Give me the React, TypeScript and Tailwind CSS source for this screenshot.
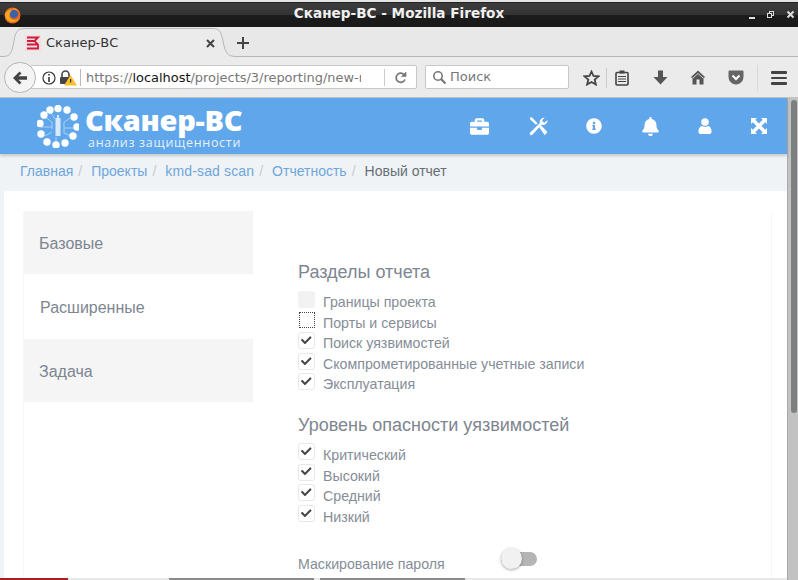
import React from "react";
import { FaBriefcase, FaInfoCircle, FaBell, FaCheck } from "react-icons/fa";

function Check({ checked, kind }: { checked?: boolean; kind?: string }) {
  const base = "w-[17px] h-[17px] rounded-[3px] flex items-center justify-center shrink-0 ";
  if (kind === "disabled") return <span className={base + "bg-[#f2f2f2]"} />;
  if (kind === "focus") return <span className="w-[16px] h-[16px] ml-[1px] border border-dotted border-[#444] shrink-0" />;
  return (
    <span className={base + "border border-[#e8e8e8] bg-white"}>
      {checked && <FaCheck className="text-[#4a4543] text-[10.5px] -mt-[1px]" />}
    </span>
  );
}

function Row({ label, kind, low }: { label: string; kind?: string; low?: boolean }) {
  return (
    <div className="flex items-start text-[14.2px] leading-[20px] text-[#858d96] h-[20.6px]">
      <Check checked kind={kind} />
      <span className={low ? "ml-[8px] mt-[2px]" : "ml-[8px] mt-[1px]"}>{label}</span>
    </div>
  );
}

function Logo() {
  const dots = [
    [21, 3.5], [30, 5], [37, 12], [40, 22], [36, 31], [28, 38], [19, 40], [10, 37], [4, 29], [3, 18.5], [7, 10], [13, 5],
  ];
  return (
    <svg width="42" height="43" viewBox="0 0 42 43" className="shrink-0">
      <g stroke="#a9d0f3" strokeWidth="1" fill="none">
        <path d="M8 12 L15 17 V24 M35 12 L27 17 V28 M4 22 H15 M38 23 H27 M8 31 L15 27 M34 31 L27 28 M19 38 V32 M13 6 L18 14" />
      </g>
      <rect x="18.5" y="13" width="5" height="18" fill="#d7e9fa" />
      <rect x="20" y="10" width="2" height="3" fill="#d7e9fa" />
      {dots.map(([x, y], i) => (
        <circle key={i} cx={x} cy={y} r="3.7" fill="#fff" />
      ))}
    </svg>
  );
}

function Sep() {
  return <span className="text-[#c4cbd1] ml-[5px] mr-[6px]">/</span>;
}

export default function App() {
  return (
    <div className="w-[798px] h-[580px] overflow-hidden flex flex-col bg-white font-['Liberation_Sans',sans-serif]">
      {/* Window title */}
      <div className="h-[3px] bg-[#e4e4e4] border-b border-[#222]" />
      <div className="h-[24px] relative flex items-center justify-center bg-[linear-gradient(#3d3d3d_0%,#333_50%,#1c1c1c_51%,#191919_100%)]">
        <svg width="17" height="17" viewBox="0 0 17 17" className="absolute left-[4px] top-[4px]">
          <circle cx="8.5" cy="8.5" r="8" fill="#e8651c" />
          <circle cx="10" cy="7" r="4.2" fill="#3a62a8" />
          <path d="M1 8 C1.5 15 11 18.5 15.8 10.5 C13 13.5 8 14 5.8 10.5 C4.8 8 5.8 5 8.5 2.5 C5 2 1.5 4.5 1 8Z" fill="#f5a623" />
          <path d="M9 1 C12 1 15 3 16 6 C14 4 12 2.6 9.5 3Z" fill="#f08a24" />
        </svg>
        <span className="text-[13.6px] font-bold text-[#f0f0f0] font-['DejaVu_Sans',sans-serif] leading-none -mt-[2px]">Сканер-ВС - Mozilla Firefox</span>
        <div className="absolute right-[3px] top-[6px] flex items-center gap-[11px] text-[#ddd]">
          <svg width="7" height="10" viewBox="0 0 7 10"><rect x="0" y="8" width="6" height="2" fill="#ddd" /></svg>
          <svg width="8" height="9" viewBox="0 0 8 9" fill="none" stroke="#ddd"><rect x="2.5" y="1.5" width="4" height="4" /><rect x="0.5" y="3.5" width="4" height="4" fill="#222" /></svg>
          <svg width="9" height="9" viewBox="0 0 9 9" stroke="#ddd" strokeWidth="2"><path d="M1.5 1.5 L7.5 7.5 M7.5 1.5 L1.5 7.5" /></svg>
        </div>
      </div>

      {/* Tab strip */}
      <div className="h-[30px] relative bg-[#e8e8e8] shrink-0">
        <svg width="798" height="30" viewBox="0 0 798 30" className="absolute left-0 top-0">
          <path d="M0 29.5 H3 C11 29.5 12 25 14 14 C15.5 5 17 1.5 26 1.5 H212 C220 1.5 221 5 223 14 C225 25 227 29.5 236 29.5 H798" fill="#ebebeb" stroke="#b8b8b8" strokeWidth="1" />
        </svg>
        <svg width="16" height="16" viewBox="0 0 16 16" className="absolute left-[25px] top-[8px]">
          <rect width="16" height="16" fill="#f6dde2" />
          <path d="M2 2.5 H13 L9.5 6 L13 9.5 V13.5 H2 M2 6 H9.5 M2 9.5 H13" fill="none" stroke="#c8203c" strokeWidth="1.8" />
        </svg>
        <span className="absolute left-[46px] top-[7px] text-[13px] text-[#333] font-['DejaVu_Sans',sans-serif] leading-[17px]">Сканер-ВС</span>
        <svg width="9" height="9" viewBox="0 0 9 9" stroke="#444" strokeWidth="2" className="absolute left-[206px] top-[12px]"><path d="M1 1 L8 8 M8 1 L1 8" /></svg>
        <svg width="14" height="14" viewBox="0 0 14 14" stroke="#444" strokeWidth="2" className="absolute left-[236px] top-[9px]"><path d="M7 1 V13 M1 7 H13" /></svg>
      </div>

      {/* Nav toolbar */}
      <div className="h-[41px] relative bg-[#ebebeb] border-b border-[#c4c4c4] shrink-0 flex items-center">
        <div className="absolute left-[30px] top-[8px] w-[387px] h-[24px] bg-white border border-[#c8c8c8] rounded-[2px]" />
        <div className="absolute left-[425px] top-[8px] w-[144px] h-[24px] bg-white border border-[#c8c8c8] rounded-[2px] flex items-center pl-[6px]">
          <svg width="15" height="15" viewBox="0 0 15 15" fill="none" stroke="#777" strokeWidth="1.6"><circle cx="6" cy="6" r="4.2" /><path d="M9 9 L13.5 13.5" strokeWidth="2.2" /></svg>
          <span className="ml-[3px] text-[13px] text-[#777] font-['DejaVu_Sans',sans-serif]">Поиск</span>
        </div>
        <div className="absolute left-[4px] top-[5px] w-[32px] h-[31px] rounded-full bg-[#f4f4f4] border border-[#b4b4b4] flex items-center justify-center">
          <svg width="16" height="14" viewBox="0 0 16 14" fill="#444"><path d="M7.5 0.5 L1 7 L7.5 13.5 L9.5 11.5 L6.5 8.7 H15 V5.3 H6.5 L9.5 2.5Z" /></svg>
        </div>
        <svg width="14" height="14" viewBox="0 0 14 14" fill="none" stroke="#333" strokeWidth="1.2" className="absolute left-[42px] top-[14px]"><circle cx="7" cy="7" r="6" /><path d="M7 6 V11 M7 3 V4.6" strokeWidth="1.6" /></svg>
        <svg width="18" height="16" viewBox="0 0 18 16" className="absolute left-[59px] top-[13px]">
          <path d="M3 7 V4.5 A3.5 3.5 0 0 1 10 4.5 V7" fill="none" stroke="#444" strokeWidth="1.6" />
          <rect x="1" y="7" width="10" height="7" rx="1" fill="#444" />
          <path d="M11.5 5 L18 15.5 H5Z" fill="#fbc02d" />
          <rect x="11" y="9" width="1.2" height="3.5" fill="#333" />
        </svg>
        <div className="absolute left-[80px] top-[12px] w-px h-[17px] bg-[#bbb]" />
        <span className="absolute left-[86px] top-[12px] w-[275px] overflow-hidden whitespace-nowrap text-[12.95px] leading-[17px] text-[#777] font-['DejaVu_Sans',sans-serif]">
          https://<span className="text-[#111]">localhost</span>/projects/3/reporting/new-r
        </span>
        <div className="absolute left-[384px] top-[12px] w-px h-[17px] bg-[#ccc]" />
        <svg width="13" height="13" viewBox="0 0 13 13" fill="none" stroke="#777" strokeWidth="1.8" className="absolute left-[394px] top-[14px]"><path d="M11 5 A4.6 4.6 0 1 0 11 8.5" /><path d="M12 1 V5.6 H7.5Z" fill="#777" strokeWidth="0.6" /></svg>

        <svg width="17" height="16" viewBox="0 0 17 16" fill="none" stroke="#444" strokeWidth="1.8" className="absolute left-[583px] top-[13px]"><path d="M8.5 1.5 L10.5 6 L15.5 6.4 L11.7 9.6 L12.9 14.5 L8.5 12 L4.1 14.5 L5.3 9.6 L1.5 6.4 L6.5 6Z" /></svg>
        <div className="absolute left-[606px] top-[11px] w-px h-[20px] bg-[#ccc]" />
        <svg width="14" height="16" viewBox="0 0 14 16" className="absolute left-[615px] top-[13px]"><rect x="1" y="2.5" width="12" height="12.5" rx="1" fill="none" stroke="#444" strokeWidth="1.6" /><rect x="4.5" y="0.5" width="5" height="3" fill="#444" /><path d="M3 6.5 H11 M3 9 H11 M3 11.5 H11" stroke="#444" strokeWidth="1.2" /></svg>
        <svg width="15" height="15" viewBox="0 0 15 15" fill="#555" className="absolute left-[653px] top-[13px]"><path d="M5 0.5 H10 V7 H14.5 L7.5 14.5 L0.5 7 H5Z" /></svg>
        <svg width="16" height="15" viewBox="0 0 16 15" fill="#555" className="absolute left-[690px] top-[13px]"><path d="M8 0.5 L15.5 7.5 H13.5 V14.5 H9.5 V9.5 H6.5 V14.5 H2.5 V7.5 H0.5Z" /><path d="M8 3.5 L3 8 M8 3.5 L13 8" stroke="#ebebeb" strokeWidth="0.8" /></svg>
        <svg width="16" height="15" viewBox="0 0 16 15" className="absolute left-[728px] top-[13px]"><path d="M1.5 0.5 H14.5 A1 1 0 0 1 15.5 1.5 V7 A7.5 7.5 0 0 1 0.5 7 V1.5 A1 1 0 0 1 1.5 0.5Z" fill="#666" /><path d="M4.5 5.5 L8 9 L11.5 5.5" fill="none" stroke="#fff" strokeWidth="2" /></svg>
        <div className="absolute left-[757px] top-[8px] w-px h-[26px] bg-[#d8d8d8]" />
        <div className="absolute left-[771px] top-[14px] w-[16px] flex flex-col gap-[3px]">
          <div className="h-[2.5px] bg-[#444] rounded-[1px]" />
          <div className="h-[2.5px] bg-[#444] rounded-[1px]" />
          <div className="h-[2.5px] bg-[#444] rounded-[1px]" />
        </div>
      </div>

      {/* Page + scrollbar */}
      <div className="flex-1 min-h-0 flex">
        <div className="flex-1 min-w-0 flex flex-col bg-[#eff3f5]">
          <div className="h-[56px] shrink-0 bg-[#60a6ea] shadow-[0_2px_3px_rgba(0,0,0,0.18)] relative z-10 flex items-center pl-[37px] text-white">
            <Logo />
            <div className="ml-[6px] flex flex-col mt-[3px]">
              <span className="text-[29px] leading-[25px] font-extrabold font-['Open_Sans',sans-serif] tracking-[-0.3px]">Сканер-ВС</span>
              <span className="mt-[4px] ml-[3px] text-[12.5px] leading-[13px] font-['Open_Sans',sans-serif] tracking-[0.7px] text-[#e6f1fc]">анализ защищенности</span>
            </div>
            <div className="ml-auto flex items-center pr-[1px] text-[18px]">
              <span className="w-[62px] flex justify-center"><FaBriefcase className="text-[19px]" /></span>
              <span className="w-[56px] flex justify-center">
                <svg width="19" height="19" viewBox="0 0 19 19" fill="#fff">
                  <path d="M18.5 3 A4.6 4.6 0 0 1 12.6 7.8 L3.6 17.6 A1.6 1.6 0 0 1 1.2 15.4 L10.9 6 A4.6 4.6 0 0 1 15.7 0.4 L13.2 3.2 L13.8 5 L15.7 5.5Z" />
                  <path d="M1 0.6 L2.8 0.2 L8.6 6.2 L7 7.8 L1.2 2.4Z" />
                  <path d="M10 10 L12 8.2 L18.4 15 L15.8 18.2Z" />
                </svg>
              </span>
              <span className="w-[56px] flex justify-center"><FaInfoCircle className="text-[16px]" /></span>
              <span className="w-[56px] flex justify-center"><FaBell className="text-[19px]" /></span>
              <span className="w-[54px] flex justify-center">
                <svg width="14" height="16" viewBox="0 0 14 16" fill="#fff">
                  <circle cx="7" cy="4" r="3.8" />
                  <path d="M0.5 13 C0.5 9.5 3 8 4 8 C5 9 9 9 10 8 C11 8 13.5 9.5 13.5 13 V14 C13.5 15.2 12.5 16 11.5 16 H2.5 C1.5 16 0.5 15.2 0.5 14Z" />
                </svg>
              </span>
              <span className="w-[54px] flex justify-center">
                <svg width="16" height="16" viewBox="0 0 16 16" fill="#fff">
                  <path d="M0 0 H6 L4.3 1.8 L8 5.5 L11.7 1.8 L10 0 H16 V6 L14.2 4.3 L10.5 8 L14.2 11.7 L16 10 V16 H10 L11.7 14.2 L8 10.5 L4.3 14.2 L6 16 H0 V10 L1.8 11.7 L5.5 8 L1.8 4.3 L0 6Z" />
                </svg>
              </span>
            </div>
          </div>
          <div className="h-[37px] shrink-0 flex items-center pl-[20px] pb-[2px] text-[14px]">
            <span className="text-[#6ea6dc]">Главная</span><Sep />
            <span className="text-[#6ea6dc] ml-[3px]">Проекты</span><Sep />
            <span className="text-[#6ea6dc] ml-[3px] tracking-[0.15px]">kmd-sad scan</span><Sep />
            <span className="text-[#6ea6dc] ml-[3px]">Отчетность</span><Sep />
            <span className="text-[#666e76] ml-[3px]">Новый отчет</span>
          </div>
          <div className="flex-1 min-h-0 ml-[4px] mr-0 bg-white rounded-t-[3px] flex pt-[20px] pl-[19px]">
            <div className="w-[230px] shrink-0 border-l border-[#f8f8f8] text-[16px] text-[#7d8691]">
              <div className="h-[63px] bg-[#f5f5f5] flex items-center pl-[15px] pt-[2px]">Базовые</div>
              <div className="h-[65px] bg-white flex items-center pl-[16px] pt-[3px]">Расширенные</div>
              <div className="h-[63px] bg-[#f5f5f5] flex items-center pl-[15px] pt-[2px]">Задача</div>
            </div>
            <div className="flex-1 min-w-0 pl-[45px] pt-[50px] border-r border-[#f7f7f7] mr-[15px]">
              <h3 className="text-[18px] leading-[22px] text-[#7d8691]">Разделы отчета</h3>
              <div className="mt-[8px]">
                <Row label="Границы проекта" kind="disabled" />
                <Row label="Порты и сервисы" kind="focus" />
                <Row label="Поиск уязвимостей" />
                <Row label="Скомпрометированные учетные записи" />
                <Row label="Эксплуатация" />
              </div>
              <h3 className="mt-[20px] text-[18px] leading-[22px] text-[#7d8691]">Уровень опасности уязвимостей</h3>
              <div className="mt-[7px]">
                <Row label="Критический" low />
                <Row label="Высокий" low />
                <Row label="Средний" low />
                <Row label="Низкий" low />
              </div>
              <div className="mt-[17px] flex items-start">
                <span className="text-[14.2px] leading-[20px] text-[#858d96] w-[203px] mt-[11.5px]">Маскирование пароля</span>
                <div className="relative w-[36px] h-[14px] mt-[10px] rounded-full bg-[#b5b5b5]">
                  <div className="absolute left-0 -top-[4px] w-[21px] h-[21px] rounded-full bg-[#f1f1f1] shadow-[0_1px_3px_rgba(0,0,0,0.35)]" />
                </div>
              </div>
            </div>
          </div>
          <div className="h-[2px] shrink-0 bg-[#e8e8e8] relative">
            <div className="absolute left-0 top-0 w-[68px] h-full bg-[#a82020]" />
            <div className="absolute left-[169px] top-0 w-[145px] h-full bg-[#8a8a8a]" />
            <div className="absolute left-[320px] top-0 w-[145px] h-full bg-[#8a8a8a]" />
          </div>
        </div>
        <div className="w-[11px] shrink-0 bg-[#c2c2c2] border-l border-[#aaa] flex flex-col pt-[2px] pl-[3px]">
          <div className="w-[6px] h-[313px] rounded-full bg-[#7c8080]" />
        </div>
      </div>
    </div>
  );
}
